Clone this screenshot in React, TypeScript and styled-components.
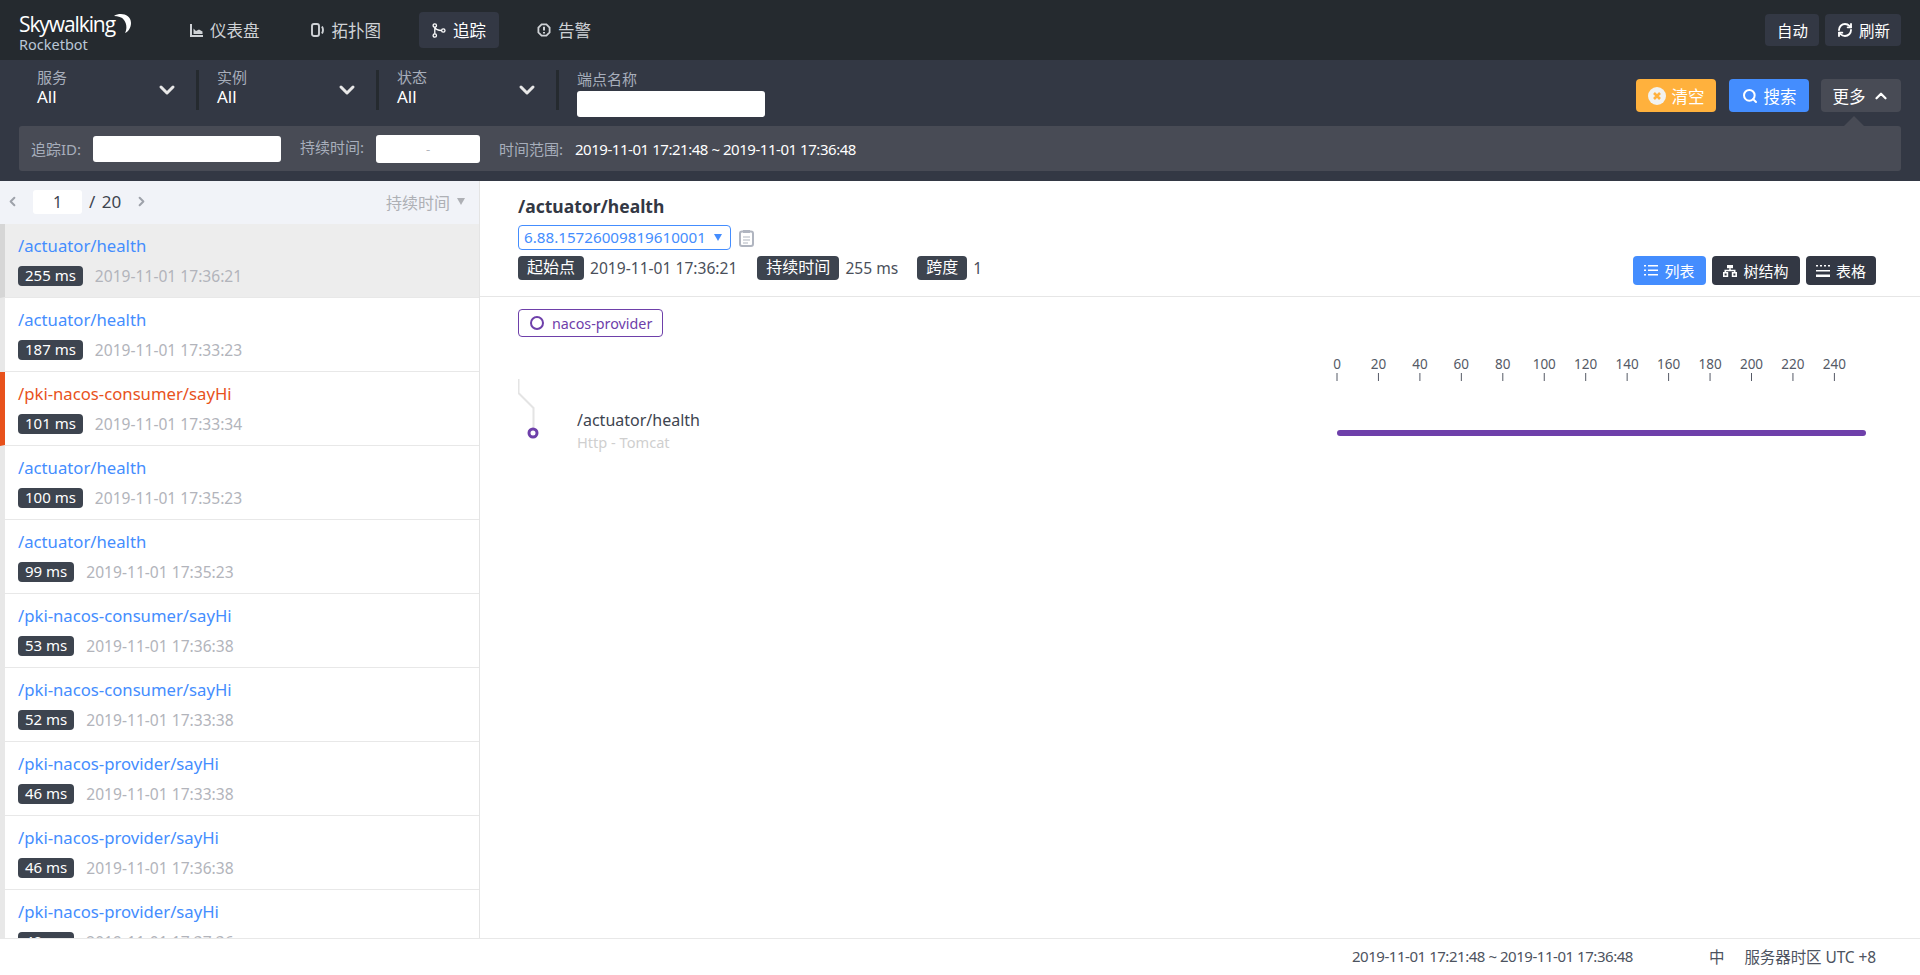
import React from "react";
import styled, { createGlobalStyle } from "styled-components";
import { ChevronDown, ChevronUp, ChevronLeft, ChevronRight, RefreshCw, Search } from "lucide-react";

const Global = createGlobalStyle`
  html, body, #root { margin: 0; height: 100%; }
  body { font-family: "Noto Sans", "Noto Sans CJK SC", sans-serif; color: #3d444f; overflow: hidden; }
  * { box-sizing: border-box; }
`;

const Page = styled.div`
  display: flex;
  flex-direction: column;
  height: 975px;
  background: #fff;
`;

const TopBar = styled.header`
  display: flex;
  align-items: center;
  height: 60px;
  flex: none;
  padding: 0 19px;
  background: #252a2f;
`;

const Logo = styled.div`
  position: relative;
  width: 158px;
  height: 40px;
  margin-top: 11px;
  align-self: flex-start;
  color: #fff;
`;

const LogoName = styled.div`
  font-family: "Open Sans", sans-serif;
  font-size: 21px;
  line-height: 26px;
  font-weight: 500;
  letter-spacing: -1.1px;
`;

const LogoSub = styled.div`
  font-size: 14.5px;
  line-height: 14px;
  color: #b9c6d6;
`;

const Moon = styled.svg`
  position: absolute;
  left: 95px;
  top: 2px;
`;

const Nav = styled.nav`
  display: flex;
  gap: 25px;
`;

const NavItem = styled.div<{ $active?: boolean }>`
  display: flex;
  align-items: center;
  gap: 7px;
  height: 36px;
  padding: 0 13px;
  border-radius: 4px;
  font-size: 16.5px;
  color: ${(p) => (p.$active ? "#fff" : "#cfd2d6")};
  background: ${(p) => (p.$active ? "#333844" : "transparent")};
`;

const TopActions = styled.div`
  display: flex;
  gap: 6px;
  margin-left: auto;
`;

const TopButton = styled.div`
  display: flex;
  align-items: center;
  gap: 6px;
  height: 32px;
  padding: 0 11px 0 12px;
  border-radius: 4px;
  background: #333844;
  color: #fff;
  font-size: 15.5px;
`;

const FilterBar = styled.section`
  flex: none;
  height: 121px;
  background: #333844;
`;

const FilterRow = styled.div`
  display: flex;
  align-items: flex-start;
  height: 66px;
  padding: 0 19px;
`;

const Selector = styled.div`
  display: flex;
  align-items: center;
  justify-content: space-between;
  width: 180px;
  height: 40px;
  margin-top: 10px;
  padding: 0 17px 0 18px;
  border-right: 3px solid #252a2f;
`;

const SelectorText = styled.div`
  display: flex;
  flex-direction: column;
  margin-top: -5px;
`;

const FieldLabel = styled.span`
  font-size: 15px;
  line-height: 19px;
  color: #a7aebb;
`;

const SelectorValue = styled.span`
  font-size: 17px;
  line-height: 20px;
  color: #fff;
`;

const EndpointField = styled.div`
  display: flex;
  flex-direction: column;
  gap: 2px;
  margin: 10px 0 0 18px;
`;

const EndpointInput = styled.div`
  width: 188px;
  height: 26px;
  border-radius: 3px;
  background: #fff;
`;

const FilterActions = styled.div`
  display: flex;
  margin: 19px 0 0 auto;
`;

const ActionButton = styled.div<{ $bg: string; $gap?: number }>`
  position: relative;
  display: flex;
  align-items: center;
  justify-content: center;
  gap: 6px;
  width: 80px;
  height: 33px;
  margin-left: ${(p) => p.$gap ?? 0}px;
  border-radius: 4px;
  background: ${(p) => p.$bg};
  color: #fff;
  font-size: 16.5px;
`;

const PanelArrow = styled.span`
  position: absolute;
  left: 23px;
  bottom: -14px;
  width: 0;
  height: 0;
  border-left: 10px solid transparent;
  border-right: 10px solid transparent;
  border-bottom: 10px solid #484b55;
`;

const MorePanel = styled.div`
  display: flex;
  align-items: center;
  height: 45px;
  margin: 0 19px;
  padding-left: 12px;
  border-radius: 3px;
  background: #484b55;
`;

const PanelLabel = styled.span<{ $w: number; $ml?: number; $up?: boolean }>`
  flex: none;
  width: ${(p) => p.$w}px;
  margin-left: ${(p) => p.$ml ?? 0}px;
  font-size: 15px;
  white-space: nowrap;
  color: #a7aebb;
  transform: translateY(${(p) => (p.$up ? -2 : 0)}px);
`;

const PanelInput = styled.div<{ $w: number; $h: number; $ml: number }>`
  display: flex;
  align-items: center;
  justify-content: center;
  flex: none;
  width: ${(p) => p.$w}px;
  height: ${(p) => p.$h}px;
  margin-left: ${(p) => p.$ml}px;
  border-radius: 3px;
  background: #fff;
  color: #b3b6bd;
  font-size: 13px;
`;

const PanelValue = styled.span`
  margin-left: 12px;
  font-size: 15px;
  letter-spacing: -0.46px;
  color: #fff;
`;

const Main = styled.main`
  display: flex;
  flex: 1;
  min-height: 0;
`;

const Sidebar = styled.aside`
  display: flex;
  flex-direction: column;
  flex: none;
  width: 480px;
  border-right: 1px solid #e4e4e4;
  overflow: hidden;
`;

const SideHeader = styled.div`
  display: flex;
  align-items: center;
  flex: none;
  height: 43px;
  padding: 0 14px 2px 5px;
  background: #f1f3f8;
  color: #9ea2aa;
`;

const PageInput = styled.div`
  width: 49px;
  height: 24px;
  margin: 0 7px 0 13px;
  border-radius: 3px;
  background: #fff;
  color: #3d444f;
  font-size: 16px;
  line-height: 24px;
  text-align: center;
`;

const PageTotal = styled.span`
  width: 45px;
  font-size: 17px;
  word-spacing: 2px;
  color: #3d444f;
`;

const SortBox = styled.div`
  display: flex;
  align-items: center;
  gap: 7px;
  margin-left: auto;
  font-size: 16px;
  color: #aeb0b5;
`;

const Caret = styled.span<{ $color?: string }>`
  width: 0;
  height: 0;
  border-left: 4px solid transparent;
  border-right: 4px solid transparent;
  border-top: 7px solid ${(p) => p.$color ?? "#aeb0b5"};
`;

const TraceItem = styled.div<{ $selected?: boolean; $error?: boolean }>`
  flex: none;
  height: 74px;
  width: 479px;
  padding: 9px 0 0 13px;
  border-left: 5px solid
    ${(p) => (p.$error ? "#e8521c" : p.$selected ? "#d6d6d6" : "#e8e8e8")};
  border-bottom: 1px solid #e8e8e8;
  background: ${(p) => (p.$selected ? "#ededed" : "#fff")};
`;

const TraceTitle = styled.div<{ $error?: boolean }>`
  font-size: 16.7px;
  line-height: 26px;
  color: ${(p) => (p.$error ? "#e8521c" : "#448dfe")};
`;

const TraceMeta = styled.div`
  display: flex;
  align-items: flex-start;
  gap: 12px;
  margin-top: 7px;
`;

const DurationTag = styled.span`
  height: 20px;
  padding: 0 7px;
  border-radius: 4px;
  background: #3d444f;
  color: #fff;
  font-size: 15px;
  line-height: 19px;
`;

const TraceDate = styled.span`
  font-size: 15.6px;
  line-height: 20px;
  color: #b2b4bb;
`;

const Detail = styled.section`
  flex: 1;
  min-width: 0;
`;

const DetailHead = styled.div`
  position: relative;
  height: 116px;
  padding: 12px 0 0 38px;
  border-bottom: 1px solid #e6e6e6;
`;

const DetailTitle = styled.h1`
  margin: 0;
  font-size: 17.5px;
  line-height: 26px;
  font-weight: 700;
  color: #333844;
`;

const IdRow = styled.div`
  display: flex;
  align-items: center;
  gap: 8px;
  margin-top: 6px;
`;

const IdSelect = styled.div`
  display: flex;
  align-items: center;
  justify-content: space-between;
  width: 213px;
  height: 25px;
  padding: 0 8px 1px 5px;
  border: 1px solid #448dfe;
  border-radius: 4px;
  color: #448dfe;
  font-size: 15.2px;
`;

const InfoRow = styled.div`
  display: flex;
  align-items: center;
  height: 24px;
  margin-top: 6px;
`;

const InfoTag = styled.span`
  height: 24px;
  padding: 0 9px;
  border-radius: 4px;
  background: #3d444f;
  color: #fff;
  font-size: 16px;
  line-height: 23px;
`;

const InfoValue = styled.span<{ $mr: number }>`
  margin: 0 ${(p) => p.$mr}px 0 6px;
  font-size: 15.6px;
  color: #4a4f5a;
`;

const ViewTabs = styled.div`
  position: absolute;
  right: 44px;
  top: 75px;
  display: flex;
  gap: 6px;
`;

const ViewTab = styled.div<{ $active?: boolean; $w: number }>`
  display: flex;
  align-items: center;
  justify-content: center;
  gap: 6px;
  width: ${(p) => p.$w}px;
  height: 29px;
  border-radius: 4px;
  background: ${(p) => (p.$active ? "#448dfe" : "#333844")};
  color: #fff;
  font-size: 15px;
`;

const Canvas = styled.div`
  padding: 12px 0 0 38px;
`;

const ServiceTag = styled.div`
  display: inline-flex;
  align-items: center;
  gap: 8px;
  height: 28px;
  padding: 0 10px 0 11px;
  border: 1px solid #6e40aa;
  border-radius: 4px;
  color: #6e40aa;
  font-size: 14.3px;
`;

const Ring = styled.span`
  width: 14px;
  height: 14px;
  border: 2.5px solid #6e40aa;
  border-radius: 50%;
`;

const TraceChart = styled.svg`
  display: block;
  margin-top: 17px;
  font-family: "Noto Sans", sans-serif;
`;

const Footer = styled.footer`
  display: flex;
  align-items: center;
  flex: none;
  height: 37px;
  padding: 0 44px 2px 0;
  border-top: 1px solid #e8e8e8;
  background: #fff;
  color: #4d5360;
  font-size: 15.5px;
`;

const FootRange = styled.span`
  margin-left: auto;
  font-size: 15px;
  letter-spacing: -0.46px;
`;

const FootLang = styled.span`
  margin: 0 20px 0 76px;
`;

const FootZone = styled.span`
  letter-spacing: -0.1px;
`;

const traces = [
  ["/actuator/health", "255 ms", "2019-11-01 17:36:21"],
  ["/actuator/health", "187 ms", "2019-11-01 17:33:23"],
  ["/pki-nacos-consumer/sayHi", "101 ms", "2019-11-01 17:33:34"],
  ["/actuator/health", "100 ms", "2019-11-01 17:35:23"],
  ["/actuator/health", "99 ms", "2019-11-01 17:35:23"],
  ["/pki-nacos-consumer/sayHi", "53 ms", "2019-11-01 17:36:38"],
  ["/pki-nacos-consumer/sayHi", "52 ms", "2019-11-01 17:33:38"],
  ["/pki-nacos-provider/sayHi", "46 ms", "2019-11-01 17:33:38"],
  ["/pki-nacos-provider/sayHi", "46 ms", "2019-11-01 17:36:38"],
  ["/pki-nacos-provider/sayHi", "40 ms", "2019-11-01 17:37:36"],
];

const ticks = Array.from({ length: 13 }, (_, i) => i * 20);

const DashIcon = () => (
  <svg width="13" height="13" viewBox="0 0 13 13" fill="currentColor">
    <path d="M0 0h2v11h11v2H0z" />
    <path d="M3.5 10V4.5L6 7l3-1.5 3.5 2V10z" />
  </svg>
);
const TopoIcon = () => (
  <svg width="14" height="16" viewBox="0 0 14 16" fill="none" stroke="currentColor" strokeWidth="1.9">
    <rect x="1" y="2" width="7" height="12" rx="2" />
    <path d="M11 4.5c1.3 2.3 1.3 4.7 0 7" />
  </svg>
);
const TraceIcon = () => (
  <svg width="14" height="15" viewBox="0 0 14 15" fill="none" stroke="currentColor" strokeWidth="1.3">
    <circle cx="2.8" cy="2.5" r="1.7" />
    <circle cx="2.8" cy="12.5" r="1.7" />
    <circle cx="11.3" cy="7.5" r="1.7" />
    <path d="M2.8 4.2v6.6M2.8 4.4c1 2 3.4 3 6.8 3.1" />
  </svg>
);
const AlarmIcon = () => (
  <svg width="14" height="14" viewBox="0 0 14 14" fill="none" stroke="currentColor" strokeWidth="1.8">
    <path d="M4.6 1.4h4.8l3.2 3.2v4.8l-3.2 3.2H4.6L1.4 9.4V4.6z" />
    <path d="M7 3.8v3.8M7 8.9v1.5" strokeWidth="2" />
  </svg>
);
const ClearIcon = () => (
  <svg width="18" height="18" viewBox="0 0 18 18">
    <circle cx="9" cy="9" r="9" fill="#f2f2f0" />
    <path d="M6 6l6 6M12 6l-6 6" stroke="#ffb13d" strokeWidth="2.6" />
  </svg>
);
const ClipIcon = () => (
  <svg width="15" height="18" viewBox="0 0 15 18" fill="none" stroke="#b0b5c0" strokeWidth="2">
    <rect x="1" y="2.5" width="13" height="14.5" rx="2" />
    <path d="M4 2.5h7" strokeWidth="3" />
    <path d="M4 8h7M4 11h7M4 14h5" strokeWidth="1.2" />
  </svg>
);
const ListIcon = () => (
  <svg width="14" height="13" viewBox="0 0 14 13" fill="#fff">
    <path d="M0 1h2v1.6H0zM4 1h10v1.6H4zM0 5.5h2v1.6H0zM4 5.5h10v1.6H4zM0 10h2v1.6H0zM4 10h10v1.6H4z" />
  </svg>
);
const TreeIcon = () => (
  <svg width="14" height="13" viewBox="0 0 14 13" fill="#fff">
    <path d="M4 1h6v3.2H4z" />
    <path d="M6.2 4.2h1.6v1.6h4.7v2.2h-1.6V7.2H3.1V8H1.5V5.8h4.7z" />
    <path d="M0 8h5.2v5H0zM1.6 9.4v2.2h2V9.4zM8.8 8H14v5H8.8zM10.4 9.4v2.2h2V9.4z" fillRule="evenodd" />
  </svg>
);
const TableIcon = () => (
  <svg width="14" height="13" viewBox="0 0 14 13" fill="#fff">
    <path d="M0 1h2v1.4H0zM4 1h2v1.4H4zM8 1h2v1.4H8zM12 1h2v1.4h-2zM0 6h14v1.4H0zM0 10.5h14V13H0z" />
  </svg>
);

export default function App() {
  return (
    <Page>
      <Global />
      <TopBar>
        <Logo>
          <LogoName>Skywalking</LogoName>
          <LogoSub>Rocketbot</LogoSub>
          <Moon width="18" height="21" viewBox="0 0 18 21">
            <path d="M0 3C6-1 17 1 17 10c0 5-3 9-6 10 2-4 2-9-1-13C8 4 4 3 0 3z" fill="#fff" />
          </Moon>
        </Logo>
        <Nav>
          <NavItem><DashIcon />仪表盘</NavItem>
          <NavItem><TopoIcon />拓扑图</NavItem>
          <NavItem $active><TraceIcon />追踪</NavItem>
          <NavItem><AlarmIcon />告警</NavItem>
        </Nav>
        <TopActions>
          <TopButton>自动</TopButton>
          <TopButton><RefreshCw size={16} strokeWidth={2.8} />刷新</TopButton>
        </TopActions>
      </TopBar>

      <FilterBar>
        <FilterRow>
          {["服务", "实例", "状态"].map((label) => (
            <Selector key={label}>
              <SelectorText>
                <FieldLabel>{label}</FieldLabel>
                <SelectorValue>All</SelectorValue>
              </SelectorText>
              <ChevronDown size={24} strokeWidth={3} color="#e8e8e8" />
            </Selector>
          ))}
          <EndpointField>
            <FieldLabel>端点名称</FieldLabel>
            <EndpointInput />
          </EndpointField>
          <FilterActions>
            <ActionButton $bg="#ffb13d"><ClearIcon />清空</ActionButton>
            <ActionButton $bg="#448dfe" $gap={13}><Search size={16} strokeWidth={3} />搜索</ActionButton>
            <ActionButton $bg="#484b55" $gap={12}>
              更多<ChevronUp size={18} strokeWidth={3} />
              <PanelArrow />
            </ActionButton>
          </FilterActions>
        </FilterRow>
        <MorePanel>
          <PanelLabel $w={50}>追踪ID:</PanelLabel>
          <PanelInput $w={188} $h={26} $ml={12} />
          <PanelLabel $w={64} $ml={19} $up>持续时间:</PanelLabel>
          <PanelInput $w={104} $h={28} $ml={12}>-</PanelInput>
          <PanelLabel $w={64} $ml={19}>时间范围:</PanelLabel>
          <PanelValue>2019-11-01 17:21:48 ~ 2019-11-01 17:36:48</PanelValue>
        </MorePanel>
      </FilterBar>

      <Main>
        <Sidebar>
          <SideHeader>
            <ChevronLeft size={15} strokeWidth={3.2} />
            <PageInput>1</PageInput>
            <PageTotal>/ 20</PageTotal>
            <ChevronRight size={15} strokeWidth={3.2} />
            <SortBox>持续时间<Caret /></SortBox>
          </SideHeader>
          {traces.map(([title, dur, date], i) => (
            <TraceItem key={i} $selected={i === 0} $error={i === 2}>
              <TraceTitle $error={i === 2}>{title}</TraceTitle>
              <TraceMeta>
                <DurationTag>{dur}</DurationTag>
                <TraceDate>{date}</TraceDate>
              </TraceMeta>
            </TraceItem>
          ))}
        </Sidebar>
        <Detail>
          <DetailHead>
            <DetailTitle>/actuator/health</DetailTitle>
            <IdRow>
              <IdSelect>6.88.15726009819610001<Caret $color="#448dfe" /></IdSelect>
              <ClipIcon />
            </IdRow>
            <InfoRow>
              <InfoTag>起始点</InfoTag>
              <InfoValue $mr={20}>2019-11-01 17:36:21</InfoValue>
              <InfoTag>持续时间</InfoTag>
              <InfoValue $mr={19}>255 ms</InfoValue>
              <InfoTag>跨度</InfoTag>
              <InfoValue $mr={0}>1</InfoValue>
            </InfoRow>
            <ViewTabs>
              <ViewTab $active $w={73}><ListIcon />列表</ViewTab>
              <ViewTab $w={88}><TreeIcon />树结构</ViewTab>
              <ViewTab $w={70}><TableIcon />表格</ViewTab>
            </ViewTabs>
          </DetailHead>
          <Canvas>
            <ServiceTag><Ring />nacos-provider</ServiceTag>
            <TraceChart width="1400" height="110" viewBox="518 354 1400 110">
              <path d="M518.5 379v14l15 15v20" fill="none" stroke="#e4e4e4" strokeWidth="2" />
              <circle cx="533" cy="433" r="4" fill="#fff" stroke="#6e40aa" strokeWidth="3" />
              <text x="577" y="426" fontSize="16" fill="#3d444f">/actuator/health</text>
              <text x="577" y="448" fontSize="14.6" fill="#cfcfcf">Http - Tomcat</text>
              {ticks.map((t, i) => {
                const x = 1337 + i * 41.45;
                return (
                  <g key={t}>
                    <text x={x} y="369" fontSize="13.5" textAnchor="middle" fill="#555a66">{t}</text>
                    <line x1={x} x2={x} y1="373" y2="381" stroke="#555a66" />
                  </g>
                );
              })}
              <rect x="1337" y="430" width="529" height="6" rx="3" fill="#6e40aa" />
            </TraceChart>
          </Canvas>
        </Detail>
      </Main>

      <Footer>
        <FootRange>2019-11-01 17:21:48 ~ 2019-11-01 17:36:48</FootRange>
        <FootLang>中</FootLang>
        <FootZone>服务器时区 UTC +8</FootZone>
      </Footer>
    </Page>
  );
}
